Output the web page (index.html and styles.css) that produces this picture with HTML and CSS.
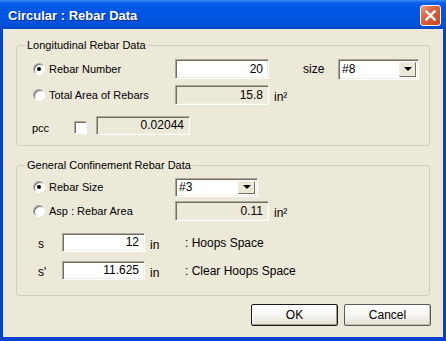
FILE: index.html
```html
<!DOCTYPE html>
<html lang="en">
<head>
  <meta charset="UTF-8">
  <title>Circular : Rebar Data</title>
  <link rel="stylesheet" href="styles.css">
</head>
<body>
  <div class="window">
    <div class="titlebar">
      <span class="title">Circular : Rebar Data</span>
      <span class="close">
        <svg width="11" height="11" viewBox="0 0 11 11"><path d="M1.5 1.5 L9.5 9.5 M9.5 1.5 L1.5 9.5" stroke="#fff" stroke-width="2.4" stroke-linecap="square"/></svg>
      </span>
    </div>
    <div class="client">
      <!-- Longitudinal -->
      <fieldset class="group g1">
        <legend>Longitudinal Rebar Data</legend>
        <div class="grid">
          <div class="opt"><span class="radio on"></span>Rebar Number</div>
          <div class="edit">20</div>
          <span></span>
          <span class="lbl">size</span>
          <div class="combo"><span class="val">#8</span><span class="drop"></span></div>

          <div class="opt"><span class="radio"></span>Total Area of Rebars</div>
          <div class="edit off">15.8</div>
          <span class="unit">in²</span>
        </div>
        <div class="pcc-row">
          <span class="pcc">pcc</span>
          <span class="check"></span>
          <div class="edit off pcc-val">0.02044</div>
        </div>
      </fieldset>

      <!-- Confinement -->
      <fieldset class="group g2">
        <legend>General Confinement Rebar Data</legend>
        <div class="grid grid2">
          <div class="opt"><span class="radio on"></span>Rebar Size</div>
          <div class="combo small"><span class="val">#3</span><span class="drop"></span></div>
          <span></span>

          <div class="opt"><span class="radio"></span>Asp : Rebar Area</div>
          <div class="edit off">0.11</div>
          <span class="unit">in²</span>
        </div>
        <div class="space-row first">
          <span class="sym">s</span>
          <div class="edit sp">12</div>
          <span class="in">in</span>
          <span class="desc">: Hoops Space</span>
        </div>
        <div class="space-row">
          <span class="sym">s'</span>
          <div class="edit sp">11.625</div>
          <span class="in">in</span>
          <span class="desc">: Clear Hoops Space</span>
        </div>
      </fieldset>

      <div class="buttons">
        <button class="btn default">OK</button>
        <button class="btn">Cancel</button>
      </div>
    </div>
  </div>
</body>
</html>
```

FILE: styles.css
```css
body {
  margin: 0;
  padding: 0;
  background-color: #fff;
  font-family: "Liberation Sans", Arial, sans-serif;
  font-size: 11px;
  color: #000;
}
.window {
  width: 446px;
  height: 341px;
  box-sizing: border-box;
  display: flex;
  flex-direction: column;
  background-color: #0842d0;
}
.titlebar {
  height: 29px;
  flex: none;
  display: flex;
  align-items: center;
  justify-content: space-between;
  padding: 0 5px 0 8px;
  background: linear-gradient(to bottom, #3b8cf5 0px, #0a5ee9 3px, #0057e5 8px, #0055e2 18px, #0050d8 25px, #0046c4 29px);
}
.title {
  color: #fff;
  font-weight: bold;
  font-size: 13px;
  text-shadow: 1px 1px 0 #0a2a8a;
  padding-top: 1px;
}
.close {
  width: 19px;
  height: 19px;
  border: 1px solid #fff;
  border-radius: 3px;
  display: flex;
  align-items: center;
  justify-content: center;
  background: linear-gradient(135deg, #ee9a7c 0%, #dc6240 40%, #c84520 100%);
  margin-top: 1px;
}
.client {
  flex: 1;
  margin: 0 3px 4px 3px;
  background-color: #ece9d8;
  padding-top: 9px;
}
.group {
  margin: 0 13px;
  padding: 0 0 0 16px;
  border: 1px solid #d0d0bf;
  border-radius: 3px;
  min-width: 0;
}
.group legend {
  margin-left: -8px;
  padding: 0 2px;
  line-height: 14px;
}
.g1 {
  padding-bottom: 10px;
}
.g2 {
  margin-top: 12px;
  padding-bottom: 15px;
}
.grid {
  display: grid;
  grid-template-columns: 142px 94px 34px 35px 81px;
  grid-auto-rows: 20px;
  row-gap: 6px;
  align-items: center;
  margin-top: 7px;
}
.grid2 {
  grid-template-columns: 142px 94px 34px;
  row-gap: 4px;
  margin-top: 5px;
}
.opt {
  display: flex;
  align-items: center;
}
.radio {
  width: 12px;
  height: 12px;
  box-sizing: border-box;
  border-radius: 50%;
  border: 1px solid;
  border-color: #a7a6aa #fff #fff #a7a6aa;
  box-shadow: inset 1px 1px 0 #716f64;
  background-color: #fff;
  margin-right: 4px;
  display: flex;
  align-items: center;
  justify-content: center;
}
.radio.on::after {
  content: "";
  width: 4px;
  height: 4px;
  border-radius: 50%;
  background-color: #000;
}
.edit {
  height: 20px;
  box-sizing: border-box;
  border: 1px solid;
  border-color: #aca899 #fff #fff #aca899;
  box-shadow: inset 1px 1px 0 #716f64, inset -1px -1px 0 #f1efe2;
  background-color: #fff;
  text-align: right;
  padding: 0 5px;
  line-height: 18px;
  font-size: 12px;
}
.edit.off {
  background-color: #ece9d8;
}
.unit {
  padding-left: 5px;
  font-size: 12px;
  padding-top: 3px;
}
.lbl {
  font-size: 12px;
}
.combo {
  height: 21px;
  box-sizing: border-box;
  border: 1px solid;
  border-color: #aca899 #fff #fff #aca899;
  box-shadow: inset 1px 1px 0 #716f64, inset -1px -1px 0 #f1efe2;
  background-color: #fff;
  display: flex;
  align-items: center;
  padding: 2px 2px 2px 3px;
}
.combo.small {
  width: 83px;
  height: 19px;
}
.combo .val {
  flex: 1;
  font-size: 12px;
}
.drop {
  width: 17px;
  align-self: stretch;
  box-sizing: border-box;
  background-color: #ece9d8;
  border: 1px solid;
  border-color: #f1efe2 #716f64 #716f64 #f1efe2;
  display: flex;
  align-items: center;
  justify-content: center;
}
.drop::after {
  content: "";
  border-left: 4px solid transparent;
  border-right: 4px solid transparent;
  border-top: 4px solid #000;
}
.pcc-row {
  display: flex;
  align-items: center;
  height: 19px;
  margin-top: 11px;
}
.pcc {
  width: 42px;
  margin-left: -1px;
  padding-top: 4px;
}
.check {
  width: 13px;
  height: 13px;
  box-sizing: border-box;
  border: 1px solid;
  border-color: #aca899 #fff #fff #aca899;
  box-shadow: inset 1px 1px 0 #716f64;
  background-color: #fff;
  margin-top: 3px;
}
.pcc-val {
  width: 94px;
  height: 19px;
  margin-left: 9px;
  line-height: 17px;
}
.space-row {
  display: flex;
  align-items: center;
  height: 19px;
  margin-top: 9px;
  padding-left: 5px;
}
.space-row.first {
  margin-top: 12px;
}
.sym {
  width: 24px;
  font-size: 12px;
  padding-top: 3px;
}
.edit.sp {
  width: 83px;
  height: 19px;
  line-height: 17px;
}
.in {
  width: 40px;
  padding-left: 5px;
  box-sizing: border-box;
  font-size: 12px;
  padding-top: 4px;
}
.desc {
  font-size: 12px;
}
.buttons {
  display: flex;
  justify-content: flex-end;
  gap: 6px;
  margin-top: 8px;
  padding-right: 12px;
}
.btn {
  width: 87px;
  height: 22px;
  font-family: "Liberation Sans", Arial, sans-serif;
  font-size: 12px;
  color: #000;
  border: 1px solid #5a5a5a;
  border-radius: 2px;
  background: linear-gradient(to bottom, #fff 0%, #f6f5f0 50%, #e3e1d6 100%);
  box-shadow: inset -1px -1px 0 #c4c1b0;
  padding: 0;
}
.btn.default {
  border-color: #1a1a1a;
  box-shadow: inset -1px -1px 0 #a09d8e, inset 1px 1px 0 #fff;
}
```
